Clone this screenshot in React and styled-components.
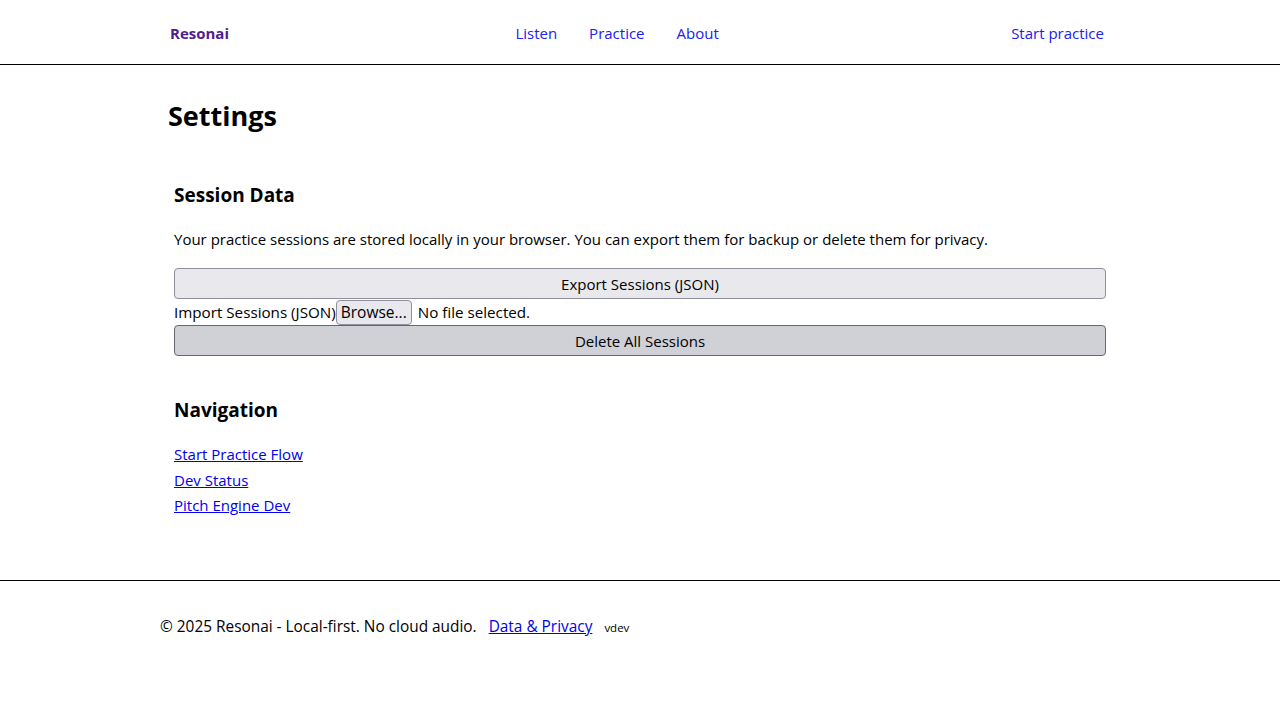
import React from "react";
import styled, { createGlobalStyle } from "styled-components";

const Global = createGlobalStyle`
  html, body { margin: 0; padding: 0; background: #fff; }
  body {
    font-family: "Open Sans", "Noto Sans", sans-serif;
    font-size: 15px;
    color: #000;
  }
  * { box-sizing: border-box; }
`;

const Header = styled.header`
  height: 65px;
  padding-top: 2px;
  border-bottom: 1px solid #000;
  display: flex;
  align-items: center;
`;

const HeaderInner = styled.div`
  width: 960px;
  margin: 0 auto;
  padding: 0 16px 0 10px;
  display: flex;
  align-items: center;
  justify-content: space-between;
`;

const Logo = styled.a`
  color: #521c8c;
  font-weight: 700;
  font-size: 15px;
  text-decoration: none;
`;

const Nav = styled.nav`
  display: flex;
  gap: 32px;
  margin-right: 6px;
`;

const NavLink = styled.a`
  color: #2020f0;
  text-decoration: none;
  font-size: 15px;
`;

const Main = styled.main`
  width: 960px;
  margin: 0 auto;
  padding: 0 14px 20px;
`;

const Title = styled.h1`
  font-size: 27px;
  font-weight: 700;
  margin: 32px 0 47px -6px;
  line-height: 38px;
`;

const Section = styled.section`
  margin-bottom: 41px;
`;

const SectionTitle = styled.h2`
  font-size: 19px;
  font-weight: 700;
  margin: 0 0 19px;
  line-height: 26px;
`;

const Text = styled.p`
  margin: 0 0 17px;
  line-height: 24px;
`;

const Button = styled.button`
  display: block;
  width: 100%;
  height: 31px;
  font-family: inherit;
  font-size: 15px;
  color: #000;
  background: ${(p) => (p.$dark ? "#d0d0d7" : "#e9e9ed")};
  border: 1px solid ${(p) => (p.$dark ? "#676774" : "#8f8f9d")};
  border-radius: 4px;
  padding: 0;
`;

const ImportRow = styled.div`
  display: flex;
  align-items: center;
  height: 26px;
  line-height: 26px;
  font-size: 15.2px;
`;

const Browse = styled.span`
  display: inline-flex;
  align-items: center;
  height: 25px;
  padding: 0 4px;
  background: #e9e9ed;
  border: 1px solid #8f8f9d;
  border-radius: 4px;
  font-size: 15.5px;
  margin-right: 6px;
`;

const LinkList = styled.div`
  display: flex;
  flex-direction: column;
  line-height: 25.5px;
  align-items: flex-start;
`;

const ULink = styled.a`
  color: #0000ee;
  text-decoration: underline;
`;

const Footer = styled.footer`
  border-top: 1px solid #000;
`;

const FooterInner = styled.div`
  width: 960px;
  margin: 0 auto;
  padding: 34px 0 40px;
  display: flex;
  align-items: baseline;
  gap: 12px;
  line-height: 24px;
  font-size: 15.4px;
`;

const Version = styled.span`
  font-size: 11.5px;
`;

export default function App() {
  return (
    <>
      <Global />
      <Header>
        <HeaderInner>
          <Logo href="#">Resonai</Logo>
          <Nav>
            <NavLink href="#">Listen</NavLink>
            <NavLink href="#">Practice</NavLink>
            <NavLink href="#">About</NavLink>
          </Nav>
          <NavLink href="#">Start practice</NavLink>
        </HeaderInner>
      </Header>
      <Main>
        <Title>Settings</Title>
        <Section>
          <SectionTitle>Session Data</SectionTitle>
          <Text>
            Your practice sessions are stored locally in your browser. You can export them for backup or delete them for privacy.
          </Text>
          <Button>Export Sessions (JSON)</Button>
          <ImportRow>
            Import Sessions (JSON)
            <Browse>Browse...</Browse>
            No file selected.
          </ImportRow>
          <Button $dark>Delete All Sessions</Button>
        </Section>
        <Section>
          <SectionTitle>Navigation</SectionTitle>
          <LinkList>
            <ULink href="#">Start Practice Flow</ULink>
            <ULink href="#">Dev Status</ULink>
            <ULink href="#">Pitch Engine Dev</ULink>
          </LinkList>
        </Section>
      </Main>
      <Footer>
        <FooterInner>
          <span>© 2025 Resonai - Local-first. No cloud audio.</span>
          <ULink href="#">Data &amp; Privacy</ULink>
          <Version>vdev</Version>
        </FooterInner>
      </Footer>
    </>
  );
}
